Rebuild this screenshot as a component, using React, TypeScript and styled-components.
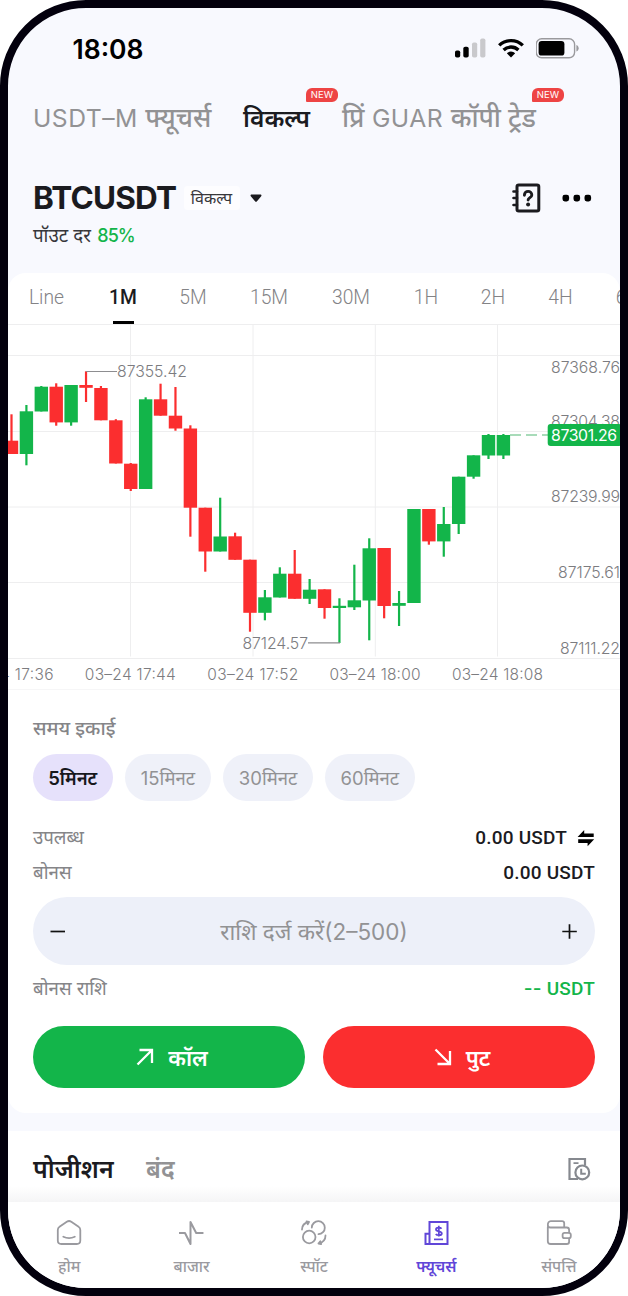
import React from "react";
import styled, { createGlobalStyle } from "styled-components";

const GREEN = "#13b54a";
const RED = "#fb2e2f";
const GREY = "#929294";
const INK = "#1b1b1f";
const VIOLET = "#6046d8";

const Global = createGlobalStyle`
  *, *::before, *::after { box-sizing: border-box; }
  html, body { margin: 0; padding: 0; background: #fff; }
  body { font-family: Inter, "Noto Sans", "Noto Sans Devanagari", sans-serif; -webkit-font-smoothing: antialiased; }
  button { border: 0; padding: 0; font: inherit; background: none; }
  svg { display: block; flex: none; }
`;

const Phone = styled.div`
  width: 628px;
  height: 1296px;
  border: 8px solid #03000d;
  border-radius: 86px;
  background: #f8f9fe;
  overflow: hidden;
  display: flex;
  flex-direction: column;
`;

const StatusBar = styled.header`
  height: 80px;
  padding: 0 41px 0 64.5px;
  display: flex;
  align-items: center;
  justify-content: space-between;
`;

const Clock = styled.span`
  padding-top: 1px;
  font-size: 26.5px;
  font-weight: 600;
  color: #000;
`;

const StatusIcons = styled.div`
  display: flex;
  align-items: center;
  gap: 12px;
`;

const TopTabs = styled.nav`
  height: 60px;
  padding-left: 25px;
  display: flex;
  align-items: center;
`;

const TopTab = styled.div<{ $w: number; $gap: number; $active?: boolean }>`
  position: relative;
  width: ${(p) => p.$w}px;
  margin-right: ${(p) => p.$gap}px;
  font-size: 24.7px;
  line-height: 36px;
  font-weight: ${(p) => (p.$active ? 600 : 400)};
  color: ${(p) => (p.$active ? INK : GREY)};
  white-space: nowrap;
`;

const Latin = styled.span`
  letter-spacing: 0.5px;
`;

const Hindi = styled.span`
  font-size: 1.07em;
  line-height: 1;
  font-weight: 500;
`;

const NewBadge = styled.span`
  position: absolute;
  right: -27px;
  top: -12px;
  width: 32px;
  height: 14px;
  border-radius: 6px 6px 6px 1px;
  background: #ee4444;
  color: #fff;
  font-size: 9.5px;
  font-weight: 400;
  line-height: 14.5px;
  letter-spacing: 0.1px;
  text-align: center;
`;

const PairHeader = styled.section`
  height: 125px;
  padding: 30px 28.5px 0 25px;
  display: flex;
  justify-content: space-between;
`;

const PairRow = styled.div`
  height: 40px;
  display: flex;
  align-items: center;
`;

const PairName = styled.h1`
  margin: 0;
  width: 150.5px;
  font-size: 31.5px;
  line-height: 40px;
  font-weight: 700;
  letter-spacing: -0.8px;
  color: ${INK};
`;

const PairKind = styled.span`
  width: 56px;
  height: 24px;
  margin-right: 10px;
  border-radius: 4px;
  background: #fdfdff;
  color: #37373b;
  font-size: 16px;
  line-height: 24px;
  text-align: center;
`;

const Payout = styled.p`
  margin: 0;
  font-size: 18.7px;
  line-height: 36px;
  color: #37373b;
  b { font-size: 18px; font-weight: 500; letter-spacing: -0.9px; margin-left: 1px; color: ${GREEN}; }
`;

const HeaderActions = styled.div`
  height: 40px;
  display: flex;
  align-items: center;
  gap: 21px;
`;

const Card = styled.section`
  height: 840px;
  border-radius: 18px;
  background: #fff;
  display: flex;
  flex-direction: column;
  overflow: hidden;
  flex: none;
`;

const Intervals = styled.div`
  height: 51px;
  display: flex;
  padding-left: 8px;
  flex: none;
`;

const Interval = styled.div<{ $w: number; $active?: boolean }>`
  width: ${(p) => p.$w}px;
  flex: none;
  display: flex;
  flex-direction: column;
  align-items: center;
  font-family: Roboto, sans-serif;
  font-size: 19.3px;
  line-height: 50px;
  font-weight: ${(p) => (p.$active ? 500 : 300)};
  color: ${(p) => (p.$active ? INK : "#838386")};
  &::after {
    content: "";
    width: 21px;
    height: 3px;
    margin-top: -2px;
    flex: none;
    background: ${(p) => (p.$active ? "#000" : "transparent")};
  }
`;

const OrderForm = styled.div`
  padding: 0 25px;
  display: flex;
  flex-direction: column;
`;

const UnitTitle = styled.h2`
  margin: 22px 0 10px;
  height: 32px;
  font-size: 19.5px;
  line-height: 32px;
  font-weight: 500;
  color: #858588;
`;

const Units = styled.div`
  display: flex;
  gap: 12.2px;
  margin-bottom: 19px;
`;

const Unit = styled.button<{ $w: number; $active?: boolean }>`
  width: ${(p) => p.$w}px;
  height: 47px;
  border-radius: 24px;
  background: ${(p) => (p.$active ? "#e6e1fb" : "#eff1f9")};
  color: ${(p) => (p.$active ? "#17171c" : GREY)};
  font-size: 18.5px;
  font-weight: ${(p) => (p.$active ? 600 : 400)};
  white-space: nowrap;
`;

const InfoRow = styled.div<{ $h?: number }>`
  height: ${(p) => p.$h ?? 35}px;
  display: flex;
  align-items: center;
  justify-content: space-between;
  font-size: 18.7px;
  line-height: 30px;
  color: #858588;
`;

const InfoLabel = styled.span`
  padding-bottom: 0;
`;

const Dashes = styled.span`
  font-family: Inter, sans-serif;
  font-weight: 500;
  margin-right: -5px;
`;

const Amount = styled.span<{ $green?: boolean }>`
  display: flex;
  align-items: center;
  gap: 10px;
  font-family: Roboto, sans-serif;
  font-size: 19px;
  letter-spacing: 0.2px;
  font-weight: 500;
  color: ${(p) => (p.$green ? GREEN : INK)};
`;

const AmountField = styled.div`
  height: 68px;
  margin-top: 7px;
  border-radius: 35px;
  padding: 0 17px;
  background: #edf0f9;
  display: flex;
  align-items: center;
  justify-content: space-between;
  color: ${GREY};
  font-size: 22.5px;
`;

const Actions = styled.div`
  margin-top: 14px;
  display: flex;
  gap: 18px;
`;

const ActionButton = styled.button<{ $color: string }>`
  flex: 1;
  height: 62px;
  padding: 0 0 1px 6px;
  border-radius: 32px;
  background: ${(p) => p.$color};
  color: #fff;
  font-size: 22px;
  font-weight: 600;
  display: flex;
  align-items: center;
  justify-content: center;
  gap: 14px;
`;

const Positions = styled.section`
  height: 71px;
  margin-top: 18px;
  padding: 0 29px 0 25px;
  background: linear-gradient(#fff 78%, #f5f5f6);
  display: flex;
  align-items: center;
  flex: none;
`;

const PositionTab = styled.div<{ $w: number; $active?: boolean }>`
  width: ${(p) => p.$w}px;
  font-size: 24.8px;
  line-height: 40px;
  padding-top: 4px;
  font-weight: 600;
  white-space: nowrap;
  color: ${(p) => (p.$active ? INK : GREY)};
`;

const HistoryButton = styled.button`
  margin: 5px 0 0 auto;
`;

const BottomNav = styled.nav`
  height: 86px;
  background: #fff;
  display: grid;
  grid-template-columns: repeat(5, 1fr);
  flex: none;
`;

const NavItem = styled.div<{ $active?: boolean }>`
  display: flex;
  flex-direction: column;
  align-items: center;
  padding-top: 17px;
  font-size: 15.7px;
  line-height: 24px;
  font-weight: ${(p) => (p.$active ? 600 : 500)};
  color: ${(p) => (p.$active ? VIOLET : "#9a9a9f")};
  svg { margin-bottom: 8px; }
`;

const X0 = 11.5;
const STEP = 14.906;

// [direction, high, body top, body bottom, low]
const candles: [string, number, number, number, number][] = [
  ["r", 414.3, 440.7, 454, 454],
  ["g", 405, 411.3, 454, 465.3],
  ["g", 386, 386.7, 411.5, 411.5],
  ["r", 383.3, 386.7, 422.4, 425.7],
  ["g", 385, 385, 422.4, 425.7],
  ["r", 371.3, 385, 387.8, 402],
  ["r", 386, 388, 420.3, 420.3],
  ["r", 419.2, 420.3, 463.5, 463.5],
  ["r", 463, 463.7, 489, 491],
  ["g", 397.3, 399.3, 489, 489],
  ["r", 383.7, 399.3, 415.7, 415.7],
  ["r", 387, 415.7, 428.5, 430.7],
  ["r", 425.3, 428.5, 507.7, 536.7],
  ["r", 507.7, 507.7, 551.5, 571.7],
  ["g", 497.7, 536.5, 551.5, 551.5],
  ["r", 532.7, 536.3, 559.8, 559.8],
  ["r", 559.7, 559.7, 612.8, 631.7],
  ["g", 590, 597.3, 612.8, 620.3],
  ["g", 567.3, 573.7, 597.5, 597.5],
  ["r", 550, 573.7, 598.8, 598.8],
  ["g", 579, 589.7, 598.8, 604],
  ["r", 589.3, 589.3, 608, 618.7],
  ["g", 598.3, 605.8, 608, 643],
  ["g", 564.7, 600.3, 607.3, 610],
  ["g", 538.3, 548.3, 600.5, 640.3],
  ["r", 548, 548, 606, 618.3],
  ["g", 591, 603, 605.8, 626],
  ["g", 509, 509, 603, 603],
  ["r", 509, 509, 541.4, 544.7],
  ["g", 507, 524, 541.4, 556.7],
  ["g", 476.7, 476.7, 524, 534],
  ["g", 455.3, 455.3, 476.7, 478.7],
  ["g", 434, 435, 455.5, 459],
  ["g", 434, 435, 455.5, 459],
];

const prices: [string, number, number][] = [
  ["87368.76", 372.5, 69],
  ["87304.38", 426.5, 69],
  ["87239.99", 502, 69],
  ["87175.61", 578, 62],
  ["87111.22", 653.5, 60],
];

const times: [string, number, number][] = [
  ["03–24 17:36", 8, 91],
  ["03–24 17:44", 130.3, 91],
  ["03–24 17:52", 252.7, 91],
  ["03–24 18:00", 375, 91],
  ["03–24 18:08", 497.5, 91],
];

function Chart() {
  return (
    <svg width="612" height="366" viewBox="8 324 612 366" fontFamily="Inter, sans-serif" fontSize="15.8" fontWeight="300" fill="#7c7c80">
      <g strokeWidth="1">
        {[324.5, 355.5, 431.5, 507, 582.5, 658.5, 689.5].map((y) => (
          <line key={y} x1="8" x2="620" y1={y} y2={y} stroke={y > 689 ? "#f6f6f7" : "#eeeeef"} />
        ))}
        {[130.5, 253, 375.3, 497.5].map((x) => (
          <line key={x} x1={x} x2={x} y1="325" y2="656.5" stroke="#eeeeef" />
        ))}
      </g>
      {candles.map(([d, high, top, bottom, low], i) => {
        const x = X0 + i * STEP;
        return (
          <g key={i} fill={d === "g" ? GREEN : RED}>
            <rect x={x - 1.1} y={high} width="2.2" height={low - high} />
            <rect x={x - 6.7} y={top} width="13.4" height={bottom - top} />
          </g>
        );
      })}
      <path d="M86 371.5H117M308 642.8H340" stroke="#8d8d90" strokeWidth="1.2" fill="none" />
      <text x="117" y="377" textLength="70">87355.42</text>
      <text x="242.5" y="648.5" textLength="65.5">87124.57</text>
      <path d="M510 435H549" stroke="#8ccfa2" strokeWidth="1.3" strokeDasharray="11 5" fill="none" />
      {prices.map(([label, y, w]) => (
        <text key={label} x={620 - w} y={y} textLength={w}>{label}</text>
      ))}
      <rect x="547.7" y="424" width="74" height="22" rx="3" fill={GREEN} />
      <text x="551" y="441" fill="#fff" textLength="66" fontWeight="400">87301.26</text>
      {times.map(([label, x, w]) => (
        <text key={label} x={x - w / 2} y="680" fontSize="15.5" textLength={w}>{label}</text>
      ))}
    </svg>
  );
}

const Signal = () => (
  <svg width="31" height="20" viewBox="0 0 31 20">
    <rect x="0" y="12.5" width="5.2" height="7" rx="1.8" fill="#000" />
    <rect x="8.3" y="8.7" width="5.4" height="10.8" rx="1.8" fill="#000" />
    <rect x="17" y="4.5" width="5.2" height="15" rx="1.8" fill="#c9c9cc" />
    <rect x="25.2" y="0.5" width="5.2" height="19" rx="1.8" fill="#c9c9cc" />
  </svg>
);

const Wifi = () => (
  <svg width="26" height="20" viewBox="0 0 26 20">
    <g fill="none" stroke="#000" strokeWidth="3.3">
      <path d="M1.2 7.4a16.8 16.8 0 0 1 23.6 0" />
      <path d="M5.6 12a10.6 10.6 0 0 1 14.8 0" />
    </g>
    <path d="M13 19.4L8.8 15.3a6 6 0 0 1 8.4 0z" fill="#000" />
  </svg>
);

const Battery = () => (
  <svg width="43" height="21" viewBox="0 0 43 21">
    <rect x="0.2" y="0.8" width="38.4" height="19" rx="5.5" fill="none" stroke="#9a9a9d" strokeWidth="1.4" />
    <rect x="2.6" y="3" width="25.8" height="14.6" rx="3.2" fill="#000" />
    <path d="M40.400 7c3 1 3 5.600 0 6.600z" fill="#9a9a9d" />
  </svg>
);

const GuideIcon = () => (
  <svg width="29" height="30" viewBox="0 0 29 30" fill="none" stroke={INK} strokeWidth="3" strokeLinecap="round">
    <rect x="5" y="2" width="21.800" height="26" rx="1.800" />
    <path d="M1.500 8.500H5M1.500 15H5M1.500 22H5" strokeWidth="2.600" />
    <path d="M12.400 12.200c0-5 7.400-5 7.400-.3 0 2.700-3.700 2.700-3.700 5.200" strokeWidth="2.900" />
    <circle cx="16.100" cy="21.600" r="2" fill={INK} stroke="none" />
  </svg>
);

const MoreIcon = () => (
  <svg width="30" height="8" viewBox="0 0 30 8" fill="#000">
    <rect x="0.500" y="0.800" width="6.600" height="6.600" rx="2.300" />
    <rect x="11.500" y="0.800" width="6.600" height="6.600" rx="2.300" />
    <rect x="22.500" y="0.800" width="6.600" height="6.600" rx="2.300" />
  </svg>
);

const Caret = () => (
  <svg width="12" height="9" viewBox="0 0 12 9">
    <path d="M1.800 0.500h8.400c1.400 0 1.600 1 .8 1.900L7 7.200c-.6.700-1.400.7-2 0L1 2.400C.2 1.500.4.500 1.800.500z" fill={INK} />
  </svg>
);

const SwapIcon = () => (
  <svg width="18" height="18" viewBox="0 0 18 18" fill="#000">
    <path d="M0.600 7.900L7.200 1v3.400h9.500v3.500zM17.200 10.300L10.600 17.300v-3.400H1.200v-3.600z" />
  </svg>
);

const Minus = () => (
  <svg width="16" height="16" viewBox="0 0 16 16" stroke="#111" strokeWidth="1.700"><path d="M.5 8.500h14.500" /></svg>
);

const Plus = () => (
  <svg width="16" height="16" viewBox="0 0 16 16" stroke="#111" strokeWidth="1.700"><path d="M.3 8.500h14.500M7.500 1.300v14.500" /></svg>
);

const ArrowUp = () => (
  <svg width="18" height="18" viewBox="0 0 18 18" fill="none" stroke="#fff" strokeWidth="2.300"><path d="M3.500 2H16v13M16 2L1.500 16.500" /></svg>
);

const ArrowDown = () => (
  <svg width="18" height="18" viewBox="0 0 18 18" fill="none" stroke="#fff" strokeWidth="2.300"><path d="M3.500 16H16V3M16 16L1.500 1.500" /></svg>
);

const HistoryIcon = () => (
  <svg width="23" height="24" viewBox="0 0 23 24" fill="none" stroke="#86898f" strokeWidth="2.200">
    <path d="M17 8V2H1.500v20H10" />
    <path d="M5.500 6.200h5" strokeWidth="1.800" />
    <circle cx="14.300" cy="15.400" r="6.900" />
    <path d="M13.200 11.800v5h4.600" strokeWidth="2" />
  </svg>
);

const navStroke = { fill: "none", stroke: "currentColor", strokeWidth: 1.8, strokeLinecap: "round", strokeLinejoin: "round" } as const;

const HomeIcon = () => (
  <svg width="26" height="28" viewBox="0 0 26 28" {...navStroke}>
    <path d="M10.800 2.700L3.500 7.700C2.200 8.500 1.800 9.300 1.800 11V21.500c0 2.500 1 3.500 3.500 3.500h15.500c2.500 0 3.500-1 3.500-3.500V11c0-1.700-.4-2.500-1.700-3.300l-7.300-5c-1.700-1.100-2.800-1.100-4.500 0z" />
    <path d="M7.300 17.700c3.500 1.700 8 1.700 11.500 0" />
  </svg>
);

const MarketIcon = () => (
  <svg width="26" height="28" viewBox="0 0 26 28" {...navStroke} strokeWidth={2}>
    <path d="M0.500 14h5.500L11.500 25V3L17.200 14h6.500" />
  </svg>
);

const SpotIcon = () => (
  <svg width="26" height="28" viewBox="0 0 26 28" {...navStroke}>
    <circle cx="8.200" cy="18" r="6.300" />
    <path d="M10.800 8.500A6.500 6.500 0 1 1 17.500 15.200" />
    <path d="M1 10.500C1 6.500 3.800 3.800 8 3M8 3L5.500 2.500M8 3L6.700 5.300" />
    <path d="M24.500 16.500c0 4-2.500 7-7 8M17.500 24.500l1.800-2.300M17.500 24.500l2.700.6" />
  </svg>
);

const FuturesIcon = () => (
  <svg width="26" height="28" viewBox="0 0 26 28" {...navStroke} strokeWidth={2} strokeLinecap="butt" strokeLinejoin="miter">
    <path d="M6.500 25V3h18v22H2.500V14.700h4" />
    <path d="M11 20.400h9" strokeWidth="1.700" />
    <path d="M18.500 9.700c-1-1.500-5.500-1.500-5.500.7 0 2.500 5.800 1.400 5.800 4 0 2.200-4.800 2.300-6 .5M15.800 6.700v10.900" strokeWidth="1.800" />
  </svg>
);

const AssetsIcon = () => (
  <svg width="26" height="28" viewBox="0 0 26 28" {...navStroke}>
    <path d="M1.800 8V22.200c0 2 1 2.800 3 2.800h16c1.600 0 2.300-.7 2.300-2.300v-3M23.100 13.500V11c0-1.600-.7-2.500-2.300-2.500H4.500C2.500 8.500 1.800 7.300 1.800 6c0-2 1-3.900 3-3.900h11.200c1.500 0 2.200.7 2.200 2.200v4" />
    <rect x="16.600" y="13.800" width="8.200" height="5.400" rx="2" />
  </svg>
);

const intervals: [string, number][] = [
  ["Line", 61], ["1M", 92], ["5M", 48], ["15M", 104], ["30M", 60], ["1H", 90], ["2H", 44], ["4H", 91],
];

export default function App() {
  return (
    <>
      <Global />
      <Phone>
        <StatusBar>
          <Clock>18:08</Clock>
          <StatusIcons>
            <Signal />
            <Wifi />
            <Battery />
          </StatusIcons>
        </StatusBar>

        <TopTabs>
          <TopTab $w={179} $gap={31}><Latin>USDT–M </Latin><Hindi>फ्यूचर्स</Hindi></TopTab>
          <TopTab $w={68} $gap={31} $active>विकल्प<NewBadge>NEW</NewBadge></TopTab>
          <TopTab $w={195} $gap={0}><Hindi>प्रिं</Hindi><Latin> GUAR </Latin><Hindi>कॉपी ट्रेड</Hindi><NewBadge>NEW</NewBadge></TopTab>
        </TopTabs>

        <PairHeader>
          <div>
            <PairRow>
              <PairName>BTCUSDT</PairName>
              <PairKind>विकल्प</PairKind>
              <Caret />
            </PairRow>
            <Payout>पॉउट दर <b>85%</b></Payout>
          </div>
          <HeaderActions>
            <GuideIcon />
            <MoreIcon />
          </HeaderActions>
        </PairHeader>

        <Card>
          <Intervals>
            {intervals.map(([label, w]) => (
              <Interval key={label} $w={w} $active={label === "1M"}>{label}</Interval>
            ))}
            <Interval $w={44}>6H</Interval>
          </Intervals>
          <Chart />
          <OrderForm>
            <UnitTitle>समय इकाई</UnitTitle>
            <Units>
              <Unit $w={79.5} $active>5मिनट</Unit>
              <Unit $w={86.5}>15मिनट</Unit>
              <Unit $w={89.5}>30मिनट</Unit>
              <Unit $w={89.5}>60मिनट</Unit>
            </Units>
            <InfoRow>
              <InfoLabel>उपलब्ध</InfoLabel>
              <Amount>0.00 USDT <SwapIcon /></Amount>
            </InfoRow>
            <InfoRow>
              <InfoLabel>बोनस</InfoLabel>
              <Amount>0.00 USDT</Amount>
            </InfoRow>
            <AmountField>
              <Minus />
              <span>राशि दर्ज करें(2–500)</span>
              <Plus />
            </AmountField>
            <InfoRow $h={47}>
              <InfoLabel>बोनस राशि</InfoLabel>
              <Amount $green><Dashes>--</Dashes> USDT</Amount>
            </InfoRow>
            <Actions>
              <ActionButton $color={GREEN}><ArrowUp />कॉल</ActionButton>
              <ActionButton $color={RED}><ArrowDown />पुट</ActionButton>
            </Actions>
          </OrderForm>
        </Card>

        <Positions>
          <PositionTab $w={113} $active>पोजीशन</PositionTab>
          <PositionTab $w={40}>बंद</PositionTab>
          <HistoryButton aria-label="history"><HistoryIcon /></HistoryButton>
        </Positions>

        <BottomNav>
          <NavItem><HomeIcon />होम</NavItem>
          <NavItem><MarketIcon />बाजार</NavItem>
          <NavItem><SpotIcon />स्पॉट</NavItem>
          <NavItem $active><FuturesIcon />फ्यूचर्स</NavItem>
          <NavItem><AssetsIcon />संपत्ति</NavItem>
        </BottomNav>
      </Phone>
    </>
  );
}
